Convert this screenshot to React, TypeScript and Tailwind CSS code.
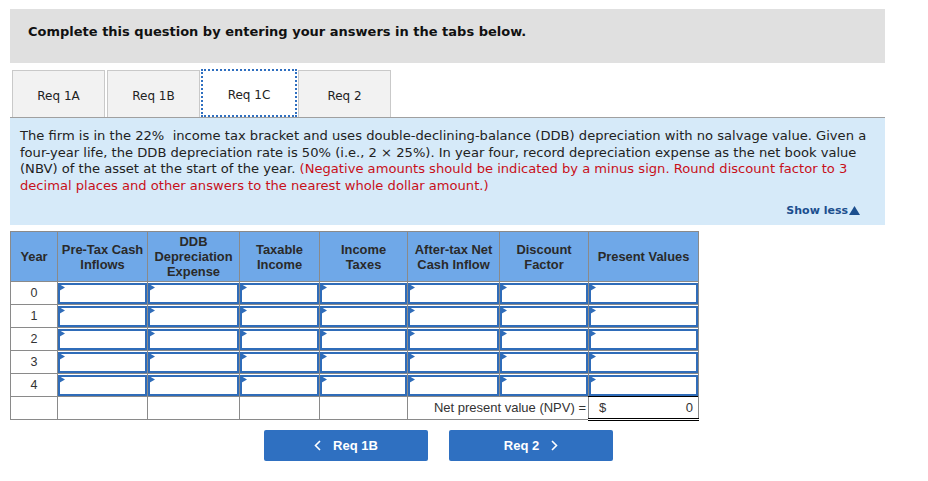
import React from 'react';

const cols = [
  { w: 'w-[47px]', label: ['Year'] },
  { w: 'w-[90px]', label: ['Pre-Tax Cash', 'Inflows'] },
  { w: 'w-[92px]', label: ['DDB', 'Depreciation', 'Expense'] },
  { w: 'w-[80px]', label: ['Taxable', 'Income'] },
  { w: 'w-[88px]', label: ['Income', 'Taxes'] },
  { w: 'w-[92px]', label: ['After-tax Net', 'Cash Inflow'] },
  { w: 'w-[89px]', label: ['Discount', 'Factor'] },
  { w: 'w-[110px]', label: ['Present Values'] },
];

const tabs = ['Req 1A', 'Req 1B', 'Req 1C', 'Req 2'];

const InputCell = () => (
  <td className="border border-[#8a8a8a] p-0 h-[23px]">
    <div className="relative h-[21px] border-2 border-[#2f6cb9] bg-white">
      <svg className="absolute -left-px -top-px" width="6" height="7" viewBox="0 0 6 7">
        <polygon points="0,0 6,3.5 0,7" fill="#2f6cb9" />
      </svg>
    </div>
  </td>
);

export default function App() {
  return (
    <div className="w-[928px] h-[481px] bg-white pt-[9px] pl-[10px] font-['DejaVu_Sans',sans-serif]">
      {/* Header */}
      <div className="w-[875px] h-[54px] bg-[#e0e0e0] pl-[18px] pt-[14px]">
        <div className="text-[13px] font-bold text-[#111] leading-[18px]">
          Complete this question by entering your answers in the tabs below.
        </div>
      </div>

      {/* Tabs */}
      <div className="flex gap-[2px] pl-[2px] mt-[7px] h-[47px] items-end">
        {tabs.map((t) =>
          t === 'Req 1C' ? (
            <div
              key={t}
              className="w-[96px] h-[48px] -mx-px pt-[3px] bg-white border-2 border-dotted border-[#2f6fc0] flex items-center justify-center text-[12px] text-[#222] relative z-10"
            >
              {t}
            </div>
          ) : (
            <div
              key={t}
              className="w-[93px] h-[47px] pt-[3px] bg-[#f2f2f2] border border-b-0 border-[#c9c9c9] flex items-center justify-center text-[12px] text-[#222]"
            >
              {t}
            </div>
          )
        )}
      </div>

      {/* Instructions */}
      <div className="w-[875px] h-[108px] bg-[#d6eaf9] border-t border-[#a0a0a0] pl-[10px] pr-[12px] pt-[10px] relative">
        <p className="text-[13.1px] leading-[16.5px] text-[#222] whitespace-nowrap">
          The firm is in the 22%&nbsp; income tax bracket and uses double-declining-balance (DDB) depreciation with no salvage value. Given a
          <br />
          four-year life, the DDB depreciation rate is 50% (i.e., 2 × 25%). In year four, record depreciation expense as the net book value
          <br />
          (NBV) of the asset at the start of the year.{' '}
          <span className="text-[#c8101a]">
            (Negative amounts should be indicated by a minus sign. Round discount factor to 3
            <br />
            decimal places and other answers to the nearest whole dollar amount.)
          </span>
        </p>
        <div className="absolute right-[25px] bottom-[6px] text-[11px] font-bold text-[#1c4f8e] flex items-center gap-[1px]">
          Show less
          <svg width="11" height="9" viewBox="0 0 11 9">
            <polygon points="5.5,0 11,9 0,9" fill="#1c4f8e" />
          </svg>
        </div>
      </div>

      {/* Table */}
      <table className="mt-[6px] border-collapse table-fixed w-[688px] font-['Liberation_Sans',Arial,sans-serif] text-[12.5px] text-[#333]">
        <colgroup>
          {cols.map((c, i) => (
            <col key={i} className={c.w} />
          ))}
        </colgroup>
        <thead>
          <tr className="h-[50px] bg-[#6fa8e8]">
            {cols.map((c, i) => (
              <th key={i} className="border border-[#8a8a8a] font-bold leading-[15px] text-[12.9px] text-[#2a2a2a] p-0">
                {c.label.map((l) => (
                  <div key={l}>{l}</div>
                ))}
              </th>
            ))}
          </tr>
        </thead>
        <tbody>
          {[0, 1, 2, 3, 4].map((y) => (
            <tr key={y} className="h-[23px]">
              <td className="border border-[#8a8a8a] text-center">{y}</td>
              {[0, 1, 2, 3, 4, 5, 6].map((k) => (
                <InputCell key={k} />
              ))}
            </tr>
          ))}
          <tr className="h-[23px]">
            <td className="border border-[#8a8a8a]"></td>
            <td className="border border-[#8a8a8a]"></td>
            <td className="border border-[#8a8a8a]"></td>
            <td className="border border-[#8a8a8a]"></td>
            <td className="border border-[#8a8a8a]"></td>
            <td colSpan={2} className="border border-[#8a8a8a] text-right pr-[2px] text-[13px]">
              Net present value (NPV) =
            </td>
            <td className="border border-[#8a8a8a] border-t-black border-b-[3px] border-b-black border-double p-0">
              <div className="flex justify-between pl-[10px] pr-[5px] text-[13px]">
                <span>$</span>
                <span>0</span>
              </div>
            </td>
          </tr>
        </tbody>
      </table>

      {/* Nav buttons */}
      <div className="flex gap-[21px] ml-[254px] mt-[9px] font-['Liberation_Sans',Arial,sans-serif]">
        <button className="w-[164px] h-[31px] rounded-[2px] bg-[#2f70c1] text-white text-[13px] font-bold flex items-center justify-center gap-[12px]">
          <svg width="7" height="11" viewBox="0 0 7 11">
            <polyline points="6,1 1.5,5.5 6,10" fill="none" stroke="white" strokeWidth="1.6" />
          </svg>
          <span>Req 1B</span>
        </button>
        <button className="w-[164px] h-[31px] rounded-[2px] bg-[#2f70c1] text-white text-[13px] font-bold flex items-center justify-center gap-[12px]">
          <span>Req 2</span>
          <svg width="7" height="11" viewBox="0 0 7 11">
            <polyline points="1,1 5.5,5.5 1,10" fill="none" stroke="white" strokeWidth="1.6" />
          </svg>
        </button>
      </div>
    </div>
  );
}
